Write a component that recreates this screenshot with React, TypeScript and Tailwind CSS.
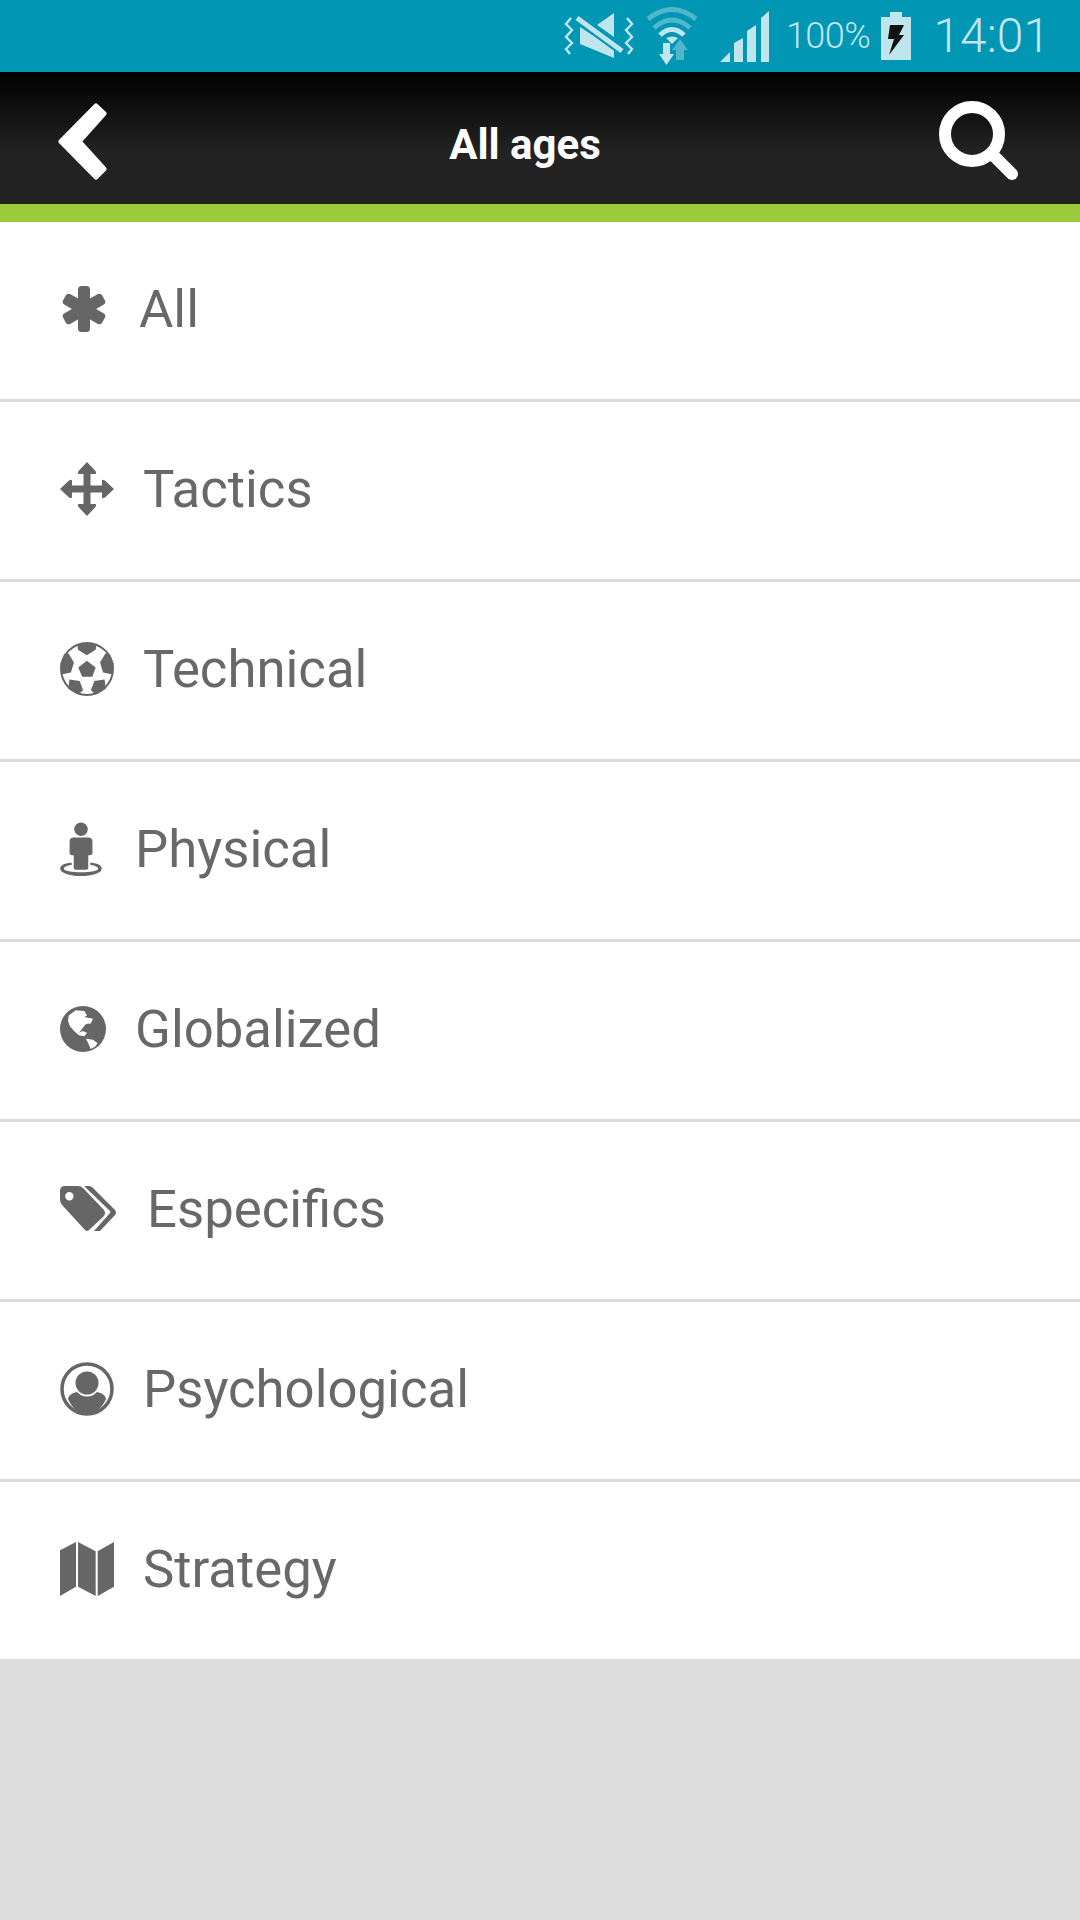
// Category list screen with status bar and toolbar.

import type { ReactNode } from "react";

const iconFill = "#666666";
const barBg = "#0096b4";
const barLight = "#c0e5ec";
const barMid = "#4fb6cc";

function StatusIcons() {
  return (
    <>
      {/* muted / vibrate */}
      <svg width="70" height="46" viewBox="0 0 70 46" className="mr-[12px]">
        <g fill="none" stroke={barLight} strokeWidth="2.4">
          <path d="M7 5 L2 11 L8 17 L2 24 L8 30 L2 36 L6 41" />
          <path d="M63 5 L68 11 L62 17 L68 24 L62 30 L68 36 L64 41" />
        </g>
        <path d="M50 0 L50 24 L33 12 Z" fill={barLight} />
        <path d="M16 14 L16 31 L50 45 L50 36 Z" fill={barLight} />
        <path d="M13 5 L58 38" stroke={barBg} strokeWidth="9" />
        <path d="M13 5 L58 38" stroke={barLight} strokeWidth="5" />
      </svg>
      {/* wifi with arrows */}
      <svg width="52" height="58" viewBox="0 0 52 58" className="mr-[22px]">
        <g fill="none" stroke={barMid} strokeWidth="5">
          <path d="M2 12 Q26 -7 50 12" />
          <path d="M8 21 Q26 5 44 21" />
        </g>
        <path d="M14 28 Q26 17 38 28" fill="none" stroke={barLight} strokeWidth="5" />
        <path d="M20 31 Q26 28 32 31 L26 37 Z" fill={barLight} />
        <path d="M30 53 L38 53 L38 43 L42 43 L34 32 L26 43 L30 43 Z" fill={barMid} />
        <path d="M17 36 L24 36 L24 47 L28 47 L20.5 58 L13 47 L17 47 Z" fill={barLight} />
      </svg>
      {/* signal */}
      <svg width="49" height="51" viewBox="0 0 49 51" className="mr-[17px]">
        <g fill={barLight}>
          <path d="M0 51 L10 41 L10 51 Z" />
          <path d="M14 32 L23 27 L23 51 L14 51 Z" />
          <path d="M27 20 L36 14 L36 51 L27 51 Z" />
          <path d="M41 7 L49 0 L49 51 L41 51 Z" />
        </g>
      </svg>
    </>
  );
}

function StatusBar() {
  return (
    <div className="h-[72px] bg-[#0096b4] flex items-center justify-end pr-[30px] text-[#c0e5ec] font-['Roboto',sans-serif] font-light">
      <StatusIcons />
      <span className="text-[36px] tracking-[-0.5px] mr-[11px]">100%</span>
      {/* battery charging */}
      <svg width="30" height="48" viewBox="0 0 30 48" className="mr-[22px]">
        <path d="M9 0 H21 V5 H30 V48 H0 V5 H9 Z" fill="#c0e5ec" />
        <path d="M9 13 H23 L18 23 H23 L8 43 L13 27 H7 Z" fill="#111111" />
      </svg>
      <span className="text-[48px]">14:01</span>
    </div>
  );
}

function Header() {
  return (
    <>
      <div className="h-[132px] bg-[linear-gradient(#000000,#222222_60%)] flex items-center">
        <svg width="50" height="77" viewBox="0 0 50 77" className="ml-[58px] mt-[6px]">
          <path
            d="M3 38.5 L38 3 L46 10.5 L21 38.5 L46 66 L38 74 Z"
            fill="#ffffff"
            stroke="#ffffff"
            strokeWidth="5"
            strokeLinejoin="round"
          />
        </svg>
        <span className="flex-1 text-center text-white text-[42px] font-bold font-['Roboto',sans-serif] pt-[13px] pl-[3px]">
          All ages
        </span>
        <svg width="80" height="80" viewBox="0 0 80 80" className="mr-[61px] mt-[6px]">
          <circle cx="33" cy="33" r="27" fill="none" stroke="#ffffff" strokeWidth="12" />
          <path d="M54 54 L73 73" stroke="#ffffff" strokeWidth="12" strokeLinecap="round" />
        </svg>
      </div>
      <div className="h-[18px] bg-[#9bcb3c]" />
    </>
  );
}

const IconAsterisk = (
  <svg width="46" height="46" viewBox="0 0 46 46" fill={iconFill} className="ml-[1px]">
    <rect x="17" y="0" width="12" height="46" rx="3.5" />
    <rect x="17" y="0.5" width="12" height="45" rx="3.5" transform="rotate(60 23 23)" />
    <rect x="17" y="0.5" width="12" height="45" rx="3.5" transform="rotate(-60 23 23)" />
  </svg>
);

const IconMove = (
  <svg width="54" height="54" viewBox="0 0 54 54" fill={iconFill}>
    <path d="M27 0 L35.5 9 Q37 12 35 12 L30.5 12 L30.5 23.5 L42 23.5 L42 19 Q42 17 45 18.5 L54 27 L45 35.5 Q42 37 42 35 L42 30.5 L30.5 30.5 L30.5 42 L35 42 Q37 42 35.5 45 L27 54 L18.5 45 Q17 42 19 42 L23.5 42 L23.5 30.5 L12 30.5 L12 35 Q12 37 9 35.5 L0 27 L9 18.5 Q12 17 12 19 L12 23.5 L23.5 23.5 L23.5 12 L19 12 Q17 12 18.5 9 Z" />
  </svg>
);

const IconBall = (
  <svg width="54" height="54" viewBox="0 0 53 53">
    <circle cx="26.5" cy="26.5" r="26.5" fill={iconFill} />
    <circle cx="26.5" cy="26.5" r="24.5" fill="#ffffff" />
    <g fill={iconFill}>
      <path d="M26.3 18.3 L35 25 L31.7 34 L21.7 34 L18 25 Z" />
      <path d="M17 2 L36 2 L35 7.7 L26.3 13 L17.7 7.7 Z" />
      <path d="M8.3 11 L13.7 20 L10.7 30 L1.5 32 L0.5 21 L4 12 Z" />
      <path d="M44.7 11 L39.3 20 L42.3 30 L51.5 32 L52.5 21 L49 12 Z" />
      <path d="M9.3 36.7 L19.3 38.3 L22.7 47.3 L18 51.5 L8 46 Z" />
      <path d="M43.7 36.7 L33.7 38.3 L30.3 47.3 L35 51.5 L45 46 Z" />
    </g>
  </svg>
);

const IconPerson = (
  <svg width="42" height="54" viewBox="1 0 40 52" fill={iconFill}>
    <circle cx="21" cy="7" r="6.5" />
    <path d="M14 15 H28 Q32 15 32 19 V30 Q32 32 28 32 L28 44 Q28 46 26 46 H16 Q14 46 14 44 L14 32 Q10 32 10 30 V19 Q10 15 14 15 Z" />
    <path d="M12 39 C4 40 1 42 1 45 C1 49 10 52 21 52 C32 52 41 49 41 45 C41 42 38 40 30 39 L30 41.5 C35 42 37.5 43.5 37.5 45 C37.5 47 30 48.5 21 48.5 C12 48.5 4.5 47 4.5 45 C4.5 43.5 7 42 12 41.5 Z" />
  </svg>
);

const IconGlobe = (
  <svg width="46" height="46" viewBox="0 0 46 46">
    <circle cx="23" cy="23" r="23" fill={iconFill} />
    <path
      d="M8.7 9.4 L15.7 4.2 L24.4 4.9 L27 9.4 L24.4 11 L33 12.8 L30.7 17.4 L26 18 L22.6 22 L19 26.8 L22.6 25 L27 26.8 L24.4 30.3 L19 29.3 L14 25 L9.8 20 L8 15 Z"
      fill="#ffffff"
    />
    <path d="M26 32.7 L33 33.8 L37.6 37.3 L35 40.8 L30.7 43 L28.6 38 Z" fill="#ffffff" />
  </svg>
);

const IconTags = (
  <svg width="57" height="46" viewBox="0 0 57 46" fill={iconFill}>
    <path
      d="M5 0 H18 Q21 0 23 2 L44 24 Q46 27 44 30 L29 44 Q27 46 25 44 L3 20 Q0 17 0 14 V5 Q0 0 5 0 Z M9.3 6 A4.2 4.2 0 1 0 9.4 14.4 A4.2 4.2 0 1 0 9.3 6 Z"
      fillRule="evenodd"
    />
    <path d="M24 0 H29 Q31 0 33 2 L55 24 Q57 26.5 55 29 L40 45 H34 L50 27 Q51 26 50 25 Z" />
  </svg>
);

const IconUser = (
  <svg width="54" height="54" viewBox="0 0 54 54">
    <circle cx="27" cy="27" r="25" fill="none" stroke={iconFill} strokeWidth="3.5" />
    <circle cx="27" cy="21" r="11.5" fill={iconFill} />
    <path d="M8 37 C9 33 12 31 17 30 C20 33 23 34.5 27 34.5 C31 34.5 34 33 37 30 C42 31 45 33 46 37 C42 46 35 52 27 52 C19 52 12 46 8 37 Z" fill={iconFill} />
  </svg>
);

const IconMap = (
  <svg width="54" height="54" viewBox="0 0 53 53" fill={iconFill}>
    <path d="M0 8 L15.7 0 V44 L0 53 Z" />
    <path d="M17.7 0 L35 9 V53 L17.7 44 Z" />
    <path d="M37 9 L53 0 V44 L37 53 Z" />
  </svg>
);

interface ItemProps {
  icon: ReactNode;
  label: string;
  iconBox: string;
}

function Item({ icon, label, iconBox }: ItemProps) {
  return (
    <div className="h-[180px] last:h-[177px] border-b-[3px] last:border-b-0 border-[#dcdcdc] bg-white flex items-center pl-[60px] pb-[3px]">
      <div className={`flex items-center justify-start ${iconBox}`}>{icon}</div>
      <span className="text-[52.7px] text-[#686868] font-['Roboto',sans-serif] pt-[2px]">{label}</span>
    </div>
  );
}

const items = [
  { label: "All", icon: IconAsterisk, iconBox: "w-[79px]" },
  { label: "Tactics", icon: IconMove, iconBox: "w-[83px]" },
  { label: "Technical", icon: IconBall, iconBox: "w-[83px]" },
  { label: "Physical", icon: IconPerson, iconBox: "w-[75px]" },
  { label: "Globalized", icon: IconGlobe, iconBox: "w-[75px]" },
  { label: "Especifics", icon: IconTags, iconBox: "w-[87px]" },
  { label: "Psychological", icon: IconUser, iconBox: "w-[83px]" },
  { label: "Strategy", icon: IconMap, iconBox: "w-[83px]" },
];

export default function App() {
  return (
    <div className="w-[1080px] h-[1920px] bg-[#dcdcdc] flex flex-col">
      <StatusBar />
      <Header />
      <div>
        {items.map((item) => (
          <Item key={item.label} {...item} />
        ))}
      </div>
    </div>
  );
}
